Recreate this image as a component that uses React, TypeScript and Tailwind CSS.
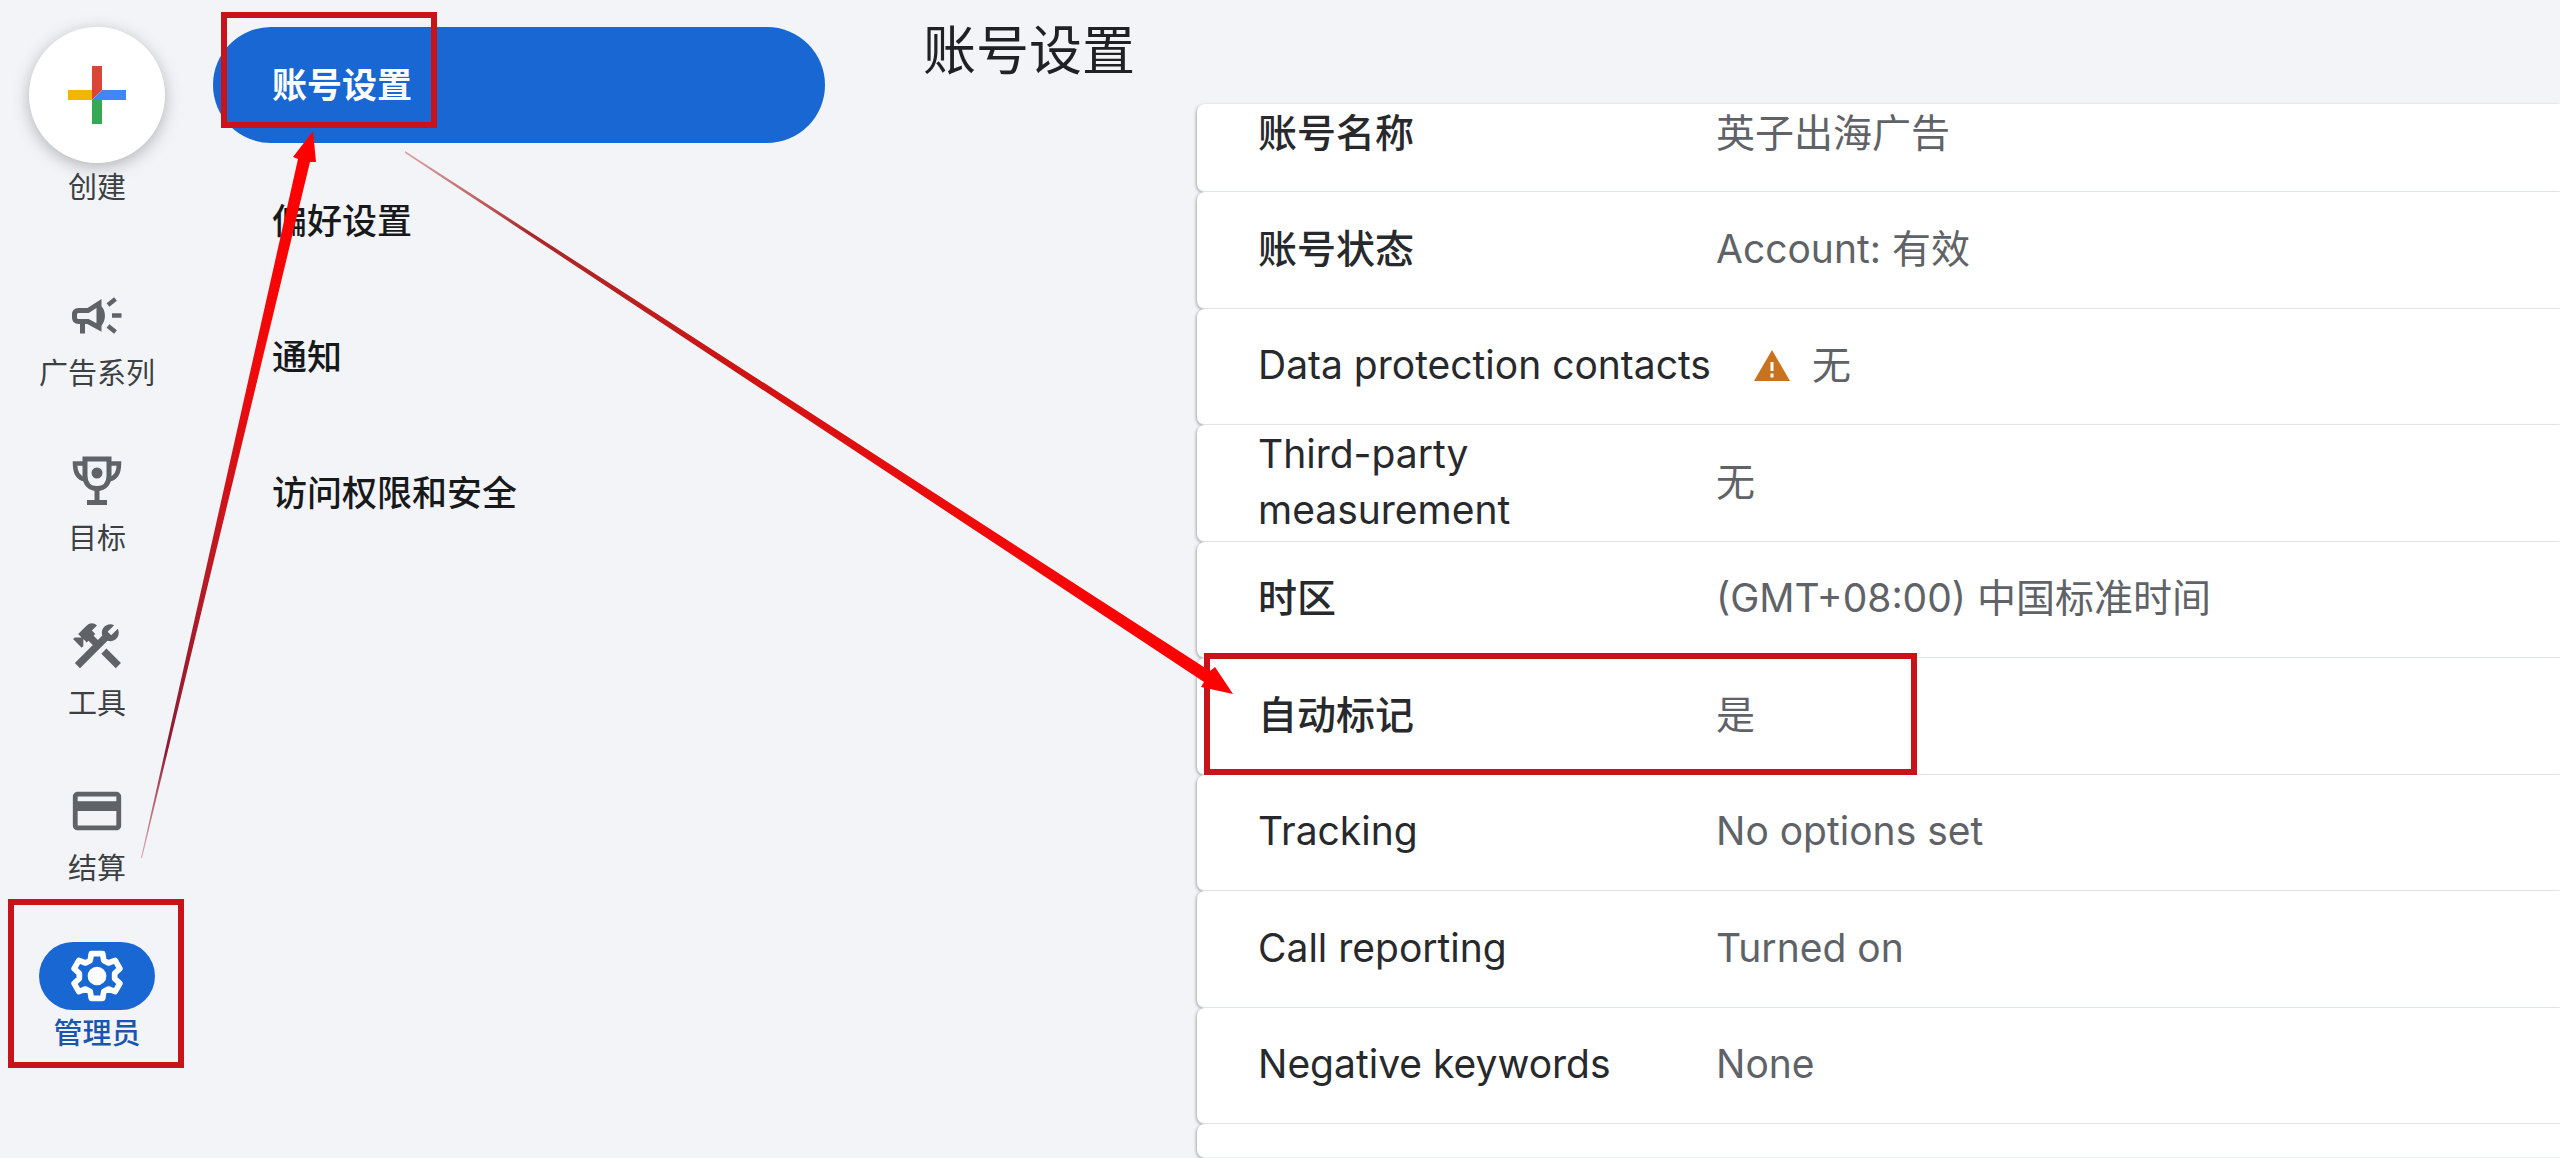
import React from "react";
import { MdConstruction, MdOutlineCreditCard } from "react-icons/md";

const CampaignIcon = () => (
  <svg viewBox="0 0 50 38" className="w-[50px] h-[38px]" fill="none" stroke="currentColor" strokeWidth="5">
    <path d="M2.5 17.500c0-2.500 1.500-4 4-4H16L27 6.500v24L16 24.500H6.500c-2.500 0-4-1.500-4-4z" />
    <path d="M10.500 24v12.500" />
    <path d="M29 9c5 4 5.500 15 0 20z" fill="currentColor" stroke="none" />
    <path d="M36 8l7.500-6M40 18.500h9.500M36 29l7.500 6" strokeWidth="4.500" />
  </svg>
);

const TrophyIcon = () => (
  <svg viewBox="0 0 50 50" className="w-[50px] h-[50px]" fill="none" stroke="currentColor" strokeWidth="5">
    <path d="M13 3h24v17c0 8-5 12.500-12 12.500S13 28 13 20z" />
    <path d="M13 7.500H3c0 9 3.500 15 10.500 16M37 7.500h10c0 9-3.500 15-10.500 16" strokeWidth="4.500" />
    <path d="M25 32v14M15 46.500h20" />
    <circle cx="25" cy="17" r="5.500" fill="currentColor" stroke="none" />
  </svg>
);

const GearIcon = () => (
  <svg viewBox="0 0 50 50" className="w-[52px] h-[52px]" fill="none" stroke="currentColor" strokeWidth="5.500" strokeLinejoin="round">
    <path d="M19.500 3.500h11l1 6.500 4.500 2.500 6.500-2.500 4.500 8-5 4.500v5l5 4.500-4.500 8-6.500-2.500-4.500 2.500-1 6.500h-11l-1-6.500-4.500-2.500-6.500 2.500-4.500-8 5-4.500v-5l-5-4.500 4.500-8 6.500 2.500 4.500-2.500z" />
    <circle cx="25" cy="25" r="9" fill="currentColor" stroke="none" />
  </svg>
);

const WarningIcon = () => (
  <svg viewBox="0 0 36 31" className="w-9 h-[31px]" role="img" aria-label="警告">
    <path d="M18 0l18 31H0z" fill="#c8711f" />
    <path d="M18 12v9M18 23.500v4" stroke="#fff" strokeWidth="3" />
  </svg>
);

const railItems = [
  { name: "广告系列", icon: <CampaignIcon /> },
  { name: "目标", icon: <TrophyIcon /> },
  { name: "工具", icon: <MdConstruction className="size-[58px]" /> },
  { name: "结算", icon: <MdOutlineCreditCard className="size-[58px]" /> },
  { name: "管理员", icon: <GearIcon />, active: true },
];

const menuItems = [
  { name: "账号设置", active: true },
  { name: "偏好设置" },
  { name: "通知" },
  { name: "访问权限和安全" },
];

const settings = [
  { label: "账号状态", value: "Account: 有效", weight: "font-medium" },
  { label: "Data protection contacts", value: "无", warning: true },
  { label: "Third-party measurement", value: "无" },
  { label: "时区", value: "(GMT+08:00) 中国标准时间", weight: "font-medium" },
  { label: "自动标记", value: "是", weight: "font-medium" },
  { label: "Tracking", value: "No options set" },
  { label: "Call reporting", value: "Turned on" },
  { label: "Negative keywords", value: "None" },
];

const rowClass = "flex items-center pl-[61px] bg-white rounded-l-lg border-b border-[#eceef0] shadow-[-1px_1px_3px_rgba(60,64,67,0.4)]";

const Rail = () => (
  <nav aria-label="主导航" className="w-[194px] shrink-0 flex flex-col items-center pt-[27px] text-[29px] leading-[34px] text-[#3c4043]">
    <button type="button" className="flex flex-col items-center gap-2 mb-[77px]">
      <span className="size-[136px] rounded-full bg-white flex items-center justify-center shadow-[0_4px_16px_rgba(60,64,67,0.35)]">
        <svg viewBox="0 0 58 58" className="size-[58px]">
          <path d="M24 0h10v24l-10 10z" fill="#db4437" />
          <path d="M0 24h24v10H0z" fill="#f4b400" />
          <path d="M24 34h10v24H24z" fill="#34a853" />
          <path d="M34 24h24v10H24z" fill="#4285f4" />
        </svg>
      </span>
      创建
    </button>
    <ul className="flex flex-col gap-[56px]">
      {railItems.map((item) => (
        <li key={item.name}>
          <a href="#" className={`flex flex-col items-center gap-[7px] ${item.active ? "text-[#1a56b0] font-medium" : ""}`}>
            <span className={`w-[116px] h-[68px] rounded-full flex items-center justify-center ${item.active ? "bg-[#1967d2] text-white" : "text-[#5f6368]"}`}>
              {item.icon}
            </span>
            {item.name}
          </a>
        </li>
      ))}
    </ul>
  </nav>
);

const Menu = () => (
  <nav aria-label="管理员" className="w-[612px] shrink-0 ml-[19px] pt-[27px]">
    <ul className="flex flex-col gap-5">
      {menuItems.map((item) => (
        <li key={item.name}>
          <a
            href="#"
            className={`h-[116px] px-[59px] rounded-full flex items-center text-[35px] ${item.active ? "bg-[#1967d2] text-white font-bold" : "text-[#18191b] font-medium"}`}
          >
            {item.name}
          </a>
        </li>
      ))}
    </ul>
  </nav>
);

// Red boxes and arrows that walk the reader through the steps
const Annotations = () => (
  <svg viewBox="0 0 2560 1158" className="absolute top-0 left-0 w-[2560px] h-[1158px] pointer-events-none" aria-hidden="true">
    <defs>
      <linearGradient id="toMenu" gradientUnits="userSpaceOnUse" x1="142" y1="856" x2="304" y2="160">
        <stop offset="0" stopColor="#c05060" stopOpacity="0.5" />
        <stop offset="0.15" stopColor="#8c1c34" />
        <stop offset="0.4" stopColor="#b81a24" />
        <stop offset="0.7" stopColor="#f00a0a" />
        <stop offset="1" stopColor="#ff0000" />
      </linearGradient>
      <linearGradient id="toRow" gradientUnits="userSpaceOnUse" x1="408" y1="155" x2="1208" y2="678">
        <stop offset="0" stopColor="#c05050" stopOpacity="0.5" />
        <stop offset="0.15" stopColor="#a82a2a" />
        <stop offset="0.4" stopColor="#cc1414" />
        <stop offset="0.7" stopColor="#f00a0a" />
        <stop offset="1" stopColor="#ff0000" />
      </linearGradient>
    </defs>
    <g fill="none" stroke="#c8131b" strokeWidth="6">
      <rect x="224" y="15" width="210" height="110" />
      <rect x="11" y="902" width="170" height="163" />
      <rect x="1207" y="656" width="707" height="116" />
    </g>
    <path d="M141 858h1L310 162l6 0-3-31-20 26 5 2z" fill="url(#toMenu)" />
    <path d="M405 151L1210 671l5-4 18 27-32-7 3-5L405 153z" fill="url(#toRow)" />
  </svg>
);

const App = () => {
  return (
    <div className="relative min-h-screen flex bg-[#f2f4f7] overflow-hidden font-[Inter,'Noto_Sans_CJK_SC',sans-serif]">
      <Rail />
      <Menu />
      <main className="flex-1 min-w-0 ml-[98px] flex flex-col">
        <h1 className="h-[104px] pt-[21px] text-[53px] leading-[60px] text-[#202124]">账号设置</h1>
        <dl className="flex-1 ml-[274px] flex flex-col text-[39px] leading-[56px]">
          <div className={`h-[88px] pb-[30px] ${rowClass}`}>
            <dt className="w-[458px] shrink-0 font-medium text-[#27292c]">账号名称</dt>
            <dd className="text-[#5f6368]">英子出海广告</dd>
          </div>
          {settings.map((row) => (
            <div key={row.label} className={`flex-1 pb-0.5 ${rowClass}`}>
              <dt className={`w-[458px] shrink-0 text-[#27292c] ${row.weight ?? ""}`}>{row.label}</dt>
              <dd className="flex items-center gap-[22px] text-[#5f6368]">
                {row.warning && <span className="ml-[38px]"><WarningIcon /></span>}
                {row.value}
              </dd>
            </div>
          ))}
          <div className={`h-[34px] ${rowClass}`} />
        </dl>
      </main>
      <Annotations />
    </div>
  );
};

export default App;
